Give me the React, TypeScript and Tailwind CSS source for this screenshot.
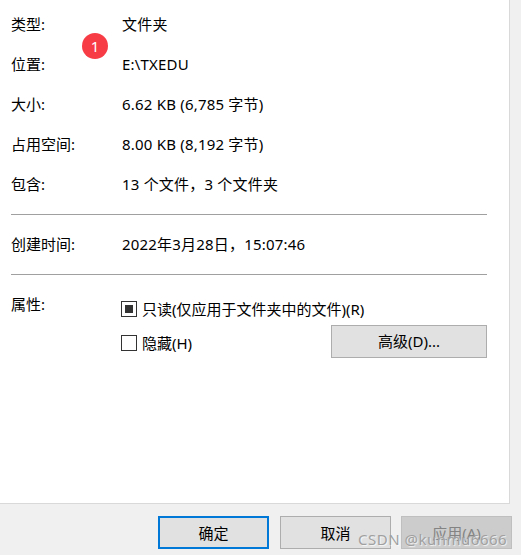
import React from 'react';

const FONT = "font-['Noto_Sans','Noto_Sans_CJK_SC',sans-serif]";

const Row = ({ label, value }: { label: string; value: string }) => (
  <div className="flex items-center h-10">
    <div className="w-[111px] shrink-0">{label}</div>
    <div className="tracking-[0.2px]">{value}</div>
  </div>
);

const Divider = () => <div className="h-px bg-[#a0a0a0] w-[476px]" />;

const Check = ({ checked, label }: { checked?: boolean; label: string }) => (
  <div className="flex items-center gap-[5px]">
    <div className="w-[16px] h-[16px] border border-[#333333] flex items-center justify-center bg-white">
      {checked && <div className="w-[8px] h-[8px] bg-[#333333]" />}
    </div>
    <span>{label}</span>
  </div>
);

export default function App() {
  return (
    <div className={`${FONT} relative w-[521px] h-[555px] overflow-hidden bg-[#f0f0f0] text-[15px] leading-5 text-black`}>
      {/* Panel */}
      <div className="w-[510px] h-[504px] bg-white border-r border-b border-[#d9d9d9] pl-[11px] pt-1">
        <Row label="类型:" value="文件夹" />
        <Row label="位置:" value="E:\TXEDU" />
        <Row label="大小:" value="6.62 KB (6,785 字节)" />
        <Row label="占用空间:" value="8.00 KB (8,192 字节)" />
        <Row label="包含:" value="13 个文件，3 个文件夹" />
        <div className="mt-[10px]"><Divider /></div>
        <div className="mt-[9px]"><Row label="创建时间:" value="2022年3月28日，15:07:46" /></div>
        <div className="mt-[10px]"><Divider /></div>

        {/* Attributes */}
        <div className="flex mt-[19px]">
          <div className="w-[110px] shrink-0">属性:</div>
          <div className="w-[366px] pt-[5px]">
            <Check checked label="只读(仅应用于文件夹中的文件)(R)" />
            <div className="flex items-center justify-between mt-[6px]">
              <div className="mt-[2px]"><Check label="隐藏(H)" /></div>
              <div className="w-[156px] h-[33px] pb-[2px] bg-[#e1e1e1] border border-[#adadad] flex items-center justify-center">
                高级(D)...
              </div>
            </div>
          </div>
        </div>
      </div>

      {/* Footer buttons */}
      <div className="flex pl-[158px] pt-3 gap-[11px]">
        <div className="w-[111px] h-[33px] bg-[#e1e1e1] border-2 border-[#0078d7] flex items-center justify-center">确定</div>
        <div className="w-[111px] h-[33px] bg-[#e1e1e1] border border-[#adadad] flex items-center justify-center">取消</div>
        <div className="w-[111px] h-[33px] -ml-px bg-[#cccccc] border border-[#bfbfbf] text-[#838383] flex items-center justify-center">应用(A)</div>
      </div>

      {/* Badge */}
      <div className="absolute left-[82px] top-[33px] w-[26px] h-[26px] rounded-full bg-[#f83c46] text-white text-[15px] flex items-center justify-center">1</div>

      {/* Watermark */}
      <div className="absolute left-[358px] top-[529px] text-[15px] leading-5 tracking-[0.5px] text-[#a0a0a0] [text-shadow:1px_1px_1px_rgba(255,255,255,0.8)]">
        CSDN @kunmu6666
      </div>
    </div>
  );
}
